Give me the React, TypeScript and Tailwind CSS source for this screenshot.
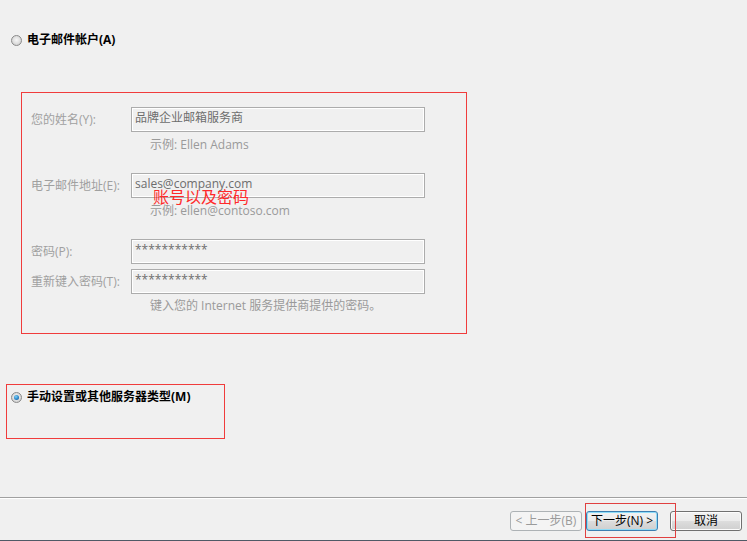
import React from "react";

const FONT = { fontFamily: '"Open Sans", "Noto Sans CJK SC", sans-serif' };

function Radio({ checked }: { checked?: boolean }) {
  return (
    <div className="w-[11px] h-[11px] rounded-full border border-[#8a8a8a] bg-[radial-gradient(circle_at_50%_45%,#f6f6f6_0%,#e2e2e2_45%,#c4c4c4_100%)] flex items-center justify-center shrink-0">
      {checked && (
        <div className="w-[5px] h-[5px] rounded-full bg-[radial-gradient(circle_at_40%_35%,#7fd3f7_0%,#2b86c9_55%,#15508a_100%)]" />
      )}
    </div>
  );
}

function Field({ label, value }: { label: string; value: string }) {
  return (
    <div className="flex items-center h-[25px]">
      <div className="w-[109px] pl-[9px] text-[12px] text-[#a0a0a0] leading-[16px]">{label}</div>
      <div className="w-[294px] h-[25px] border border-[#acacac] shadow-[inset_0_0_0_1px_#ffffff] bg-[#f0f0f0] pl-[3px] pt-[2px] text-[12px] leading-[16px] text-[#6d6d6d]">
        {value}
      </div>
    </div>
  );
}

function Example({ children }: { children: React.ReactNode }) {
  return <div className="pl-[128px] h-[14px] text-[12px] leading-[14px] text-[#9a9a9a]">{children}</div>;
}

export default function App() {
  return (
    <div className="w-[747px] h-[541px] bg-[#f0f0f0] flex flex-col relative overflow-hidden" style={FONT}>
      <div className="flex-1 flex flex-col">
        <div className="mt-[32px] h-[16px] flex items-center pl-[11px] gap-[5px]">
          <Radio />
          <span className="text-[12px] font-bold text-black leading-[16px]">电子邮件帐户(A)</span>
        </div>

        <div className="relative ml-[21px] mt-[44px] w-[446px] h-[242px] border border-[#f03c3c] pt-[14px] flex flex-col">
          <Field label="您的姓名(Y):" value="品牌企业邮箱服务商" />
          <div className="mt-[6px]">
            <Example>示例: Ellen Adams</Example>
          </div>
          <div className="mt-[21px]">
            <Field label="电子邮件地址(E):" value="sales@company.com" />
          </div>
          <div className="mt-[6px]">
            <Example>示例: ellen@contoso.com</Example>
          </div>
          <div className="mt-[21px]">
            <Field label="密码(P):" value="***********" />
          </div>
          <div className="mt-[5px]">
            <Field label="重新键入密码(T):" value="***********" />
          </div>
          <div className="mt-[5px]">
            <Example>键入您的 Internet 服务提供商提供的密码。</Example>
          </div>
          <div className="absolute left-[131px] top-[95px] text-[16px] leading-[18px] text-[#ff2a2a]">账号以及密码</div>
        </div>

        <div className="ml-[6px] mt-[50px] w-[219px] h-[55px] border border-[#f03c3c] pt-[4px] pl-[4px]">
          <div className="h-[16px] flex items-center gap-[5px]">
            <Radio checked />
            <span className="text-[12px] font-bold text-black leading-[16px]">手动设置或其他服务器类型(M)</span>
          </div>
        </div>
      </div>

      <div className="h-[2px] border-t border-[#a0a0a0] border-b border-b-white" />

      <div className="h-[41px] flex justify-end items-start pt-[12px] pr-[5px]">
        <div className="w-[72px] h-[20px] rounded-[3px] border border-[#adb2b5] bg-[#f4f4f4] flex items-center justify-center text-[12px] text-[#9a9a9a] leading-[16px]">
          &lt; 上一步(B)
        </div>
        <div className="ml-[4px] w-[72px] h-[20px] rounded-[3px] border border-[#3c7fb1] shadow-[inset_0_0_0_1px_#8fdcf8] bg-[linear-gradient(#f2f2f2_0%,#ebebeb_50%,#dddddd_51%,#cfcfcf_100%)] flex items-center justify-center text-[12px] text-black leading-[16px]">
          下一步(N) &gt;
        </div>
        <div className="ml-[12px] w-[72px] h-[20px] rounded-[3px] border border-[#707070] shadow-[inset_0_0_0_1px_#fcfcfc] bg-[linear-gradient(#f2f2f2_0%,#ebebeb_50%,#dddddd_51%,#cfcfcf_100%)] flex items-center justify-center text-[12px] text-black leading-[16px]">
          取消
        </div>
      </div>

      <div className="h-[1px] bg-[#4f5a66]" />

      <div className="absolute left-[585px] top-[503px] w-[91px] h-[35px] border border-[#e04040]" />
    </div>
  );
}
